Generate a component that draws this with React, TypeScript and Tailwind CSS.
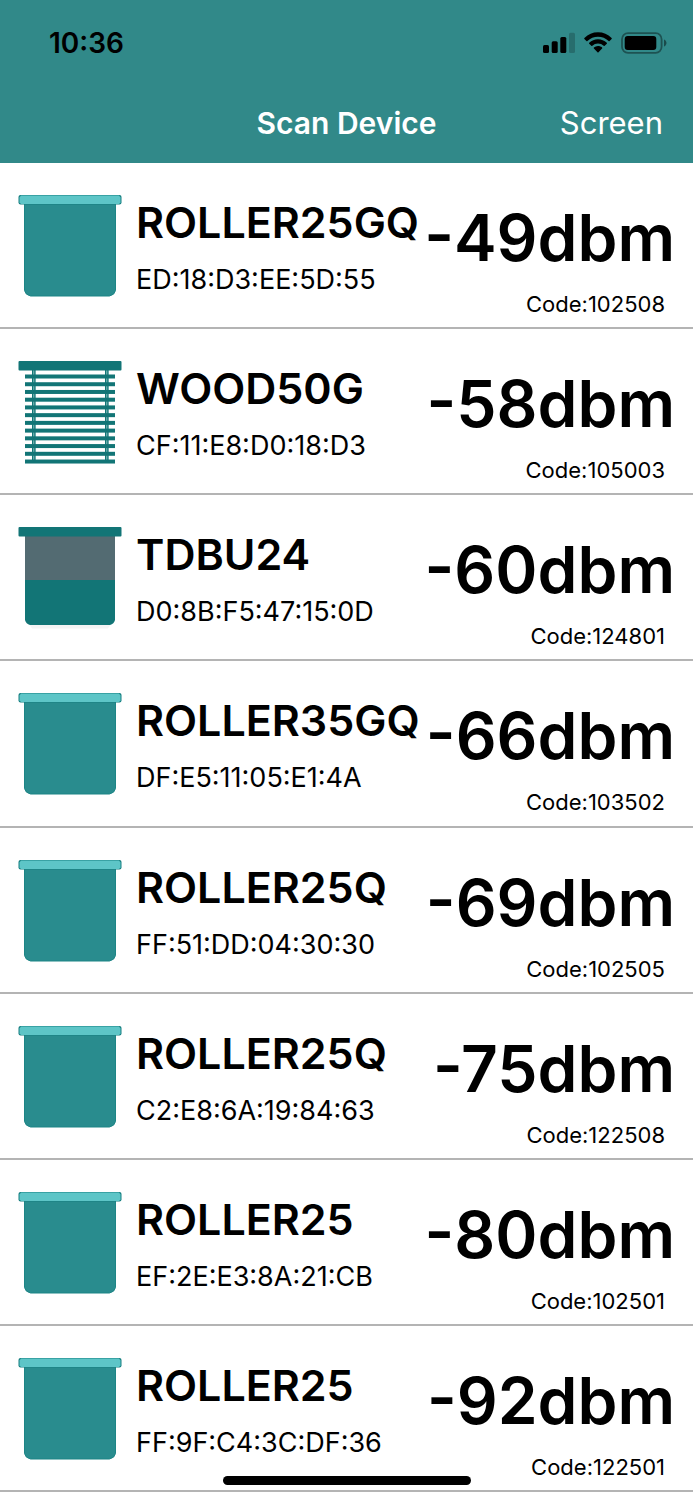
type Kind = "roller" | "blind" | "tdbu";

interface Device {
  name: string;
  mac: string;
  rssi: number;
  code: string;
  kind: Kind;
}

const devices: Device[] = [
  { name: "ROLLER25GQ", mac: "ED:18:D3:EE:5D:55", rssi: -49, code: "102508", kind: "roller" },
  { name: "WOOD50G", mac: "CF:11:E8:D0:18:D3", rssi: -58, code: "105003", kind: "blind" },
  { name: "TDBU24", mac: "D0:8B:F5:47:15:0D", rssi: -60, code: "124801", kind: "tdbu" },
  { name: "ROLLER35GQ", mac: "DF:E5:11:05:E1:4A", rssi: -66, code: "103502", kind: "roller" },
  { name: "ROLLER25Q", mac: "FF:51:DD:04:30:30", rssi: -69, code: "102505", kind: "roller" },
  { name: "ROLLER25Q", mac: "C2:E8:6A:19:84:63", rssi: -75, code: "122508", kind: "roller" },
  { name: "ROLLER25", mac: "EF:2E:E3:8A:21:CB", rssi: -80, code: "102501", kind: "roller" },
  { name: "ROLLER25", mac: "FF:9F:C4:3C:DF:36", rssi: -92, code: "122501", kind: "roller" },
];

function RollerIcon() {
  return (
    <svg viewBox="0 0 104 104" className="size-[104px] shrink-0" aria-hidden="true">
      <path d="M6.500 9h91v87.500q-1 4.500-6 5.500h-79q-5-1-6-5.500z" fill="#298c8e" stroke="#1d8586" strokeWidth="1" />
      <rect x="0.500" y="1" width="103" height="9.500" rx="2" fill="#167f80" />
      <path d="M3 1.500h98l1.500 2v5l-1.500 1.500h-98l-1.500-1.500v-5z" fill="#5dc5c7" />
    </svg>
  );
}

function BlindIcon() {
  const slats = Array.from({ length: 12 }, (_, i) => 14.500 + i * 7.73);
  return (
    <svg viewBox="0 0 104 104" className="size-[104px] shrink-0" aria-hidden="true">
      <g fill="#7db9b9">
        <rect x="14" y="10" width="3.500" height="92" />
        <rect x="87" y="10" width="3.500" height="92" />
      </g>
      <g fill="#127576">
        <rect x="0.500" y="1" width="103" height="9.500" rx="1" />
        {slats.map((y) => (
          <rect key={y} x="7" y={y} width="90" height="4" />
        ))}
        <rect x="14" y="10" width="1.200" height="92" />
        <rect x="16.300" y="10" width="1.200" height="92" />
        <rect x="87" y="10" width="1.200" height="92" />
        <rect x="89.300" y="10" width="1.200" height="92" />
      </g>
    </svg>
  );
}

function TopDownIcon() {
  return (
    <svg viewBox="0 0 104 104" className="size-[104px] shrink-0" aria-hidden="true">
      <path d="M11 98h82l-3 4.500h-76z" fill="#f4f4f4" />
      <path d="M7 9h90v85q-1 4-5 5h-80q-4-1-5-5z" fill="#127576" />
      <rect x="7" y="9" width="90" height="45" fill="#536b72" />
      <rect x="0.500" y="1" width="103" height="9.500" rx="1" fill="#127576" />
    </svg>
  );
}

const icons: Record<Kind, () => React.JSX.Element> = {
  roller: RollerIcon,
  blind: BlindIcon,
  tdbu: TopDownIcon,
};

function StatusBar() {
  return (
    <div className="flex h-[86px] items-center justify-between pr-[26px] pl-[49px] text-black">
      <span className="text-[28px] leading-8 font-semibold">10:36</span>
      <div className="flex items-center gap-[9px]">
        <svg viewBox="0 0 32 22" className="h-[22px] w-8" role="img" aria-label="Signal strength">
          <rect x="0" y="13" width="6" height="8" rx="1.500" />
          <rect x="8.700" y="9.300" width="6" height="11.700" rx="1.500" />
          <rect x="17.300" y="5" width="6" height="16" rx="1.500" />
          <rect x="26" y="0.800" width="6" height="20.200" rx="1.500" opacity="0.200" />
        </svg>
        <svg viewBox="0 0 28 22" className="h-[22px] w-7" role="img" aria-label="Wi-Fi">
          <path d="M14 0.300c5.200 0 10 2 13.600 5.600.3.300.3.700 0 1l-2 2c-.3.300-.7.300-1 0a15.400 15.400 0 0 0-21.200 0c-.3.300-.7.300-1 0l-2-2c-.3-.3-.3-.7 0-1A19.400 19.400 0 0 1 14 .3z" />
          <path d="M14 7.200c3.300 0 6.400 1.200 8.800 3.500.3.300.3.700 0 1l-2.100 2c-.3.300-.7.300-1 0a8.400 8.400 0 0 0-11.400 0c-.3.300-.7.300-1 0l-2.100-2c-.3-.3-.3-.7 0-1A12.700 12.700 0 0 1 14 7.200z" />
          <path d="M14 14c1.500 0 3 .5 4.100 1.500.3.300.3.700 0 1l-3.600 3.700c-.3.300-.7.300-1 0l-3.600-3.700c-.3-.3-.3-.7 0-1A6.200 6.200 0 0 1 14 14z" />
        </svg>
        <svg viewBox="0 0 46 22" className="h-[22px] w-[46px]" role="img" aria-label="Battery">
          <rect x="1" y="1.200" width="39.600" height="19.600" rx="6" fill="none" stroke="#000" strokeWidth="1.800" opacity="0.400" />
          <rect x="3.700" y="4" width="31.600" height="14" rx="3" />
          <path d="M43 7.500c1.600.6 2.500 2 2.500 3.500s-.9 2.900-2.500 3.500z" opacity="0.450" />
        </svg>
      </div>
    </div>
  );
}

function DeviceRow({ device }: { device: Device }) {
  const Icon = icons[device.kind];
  return (
    <li className="flex items-start justify-between border-b-2 border-[#b4b4b4] pr-[18px] pl-[18px] whitespace-nowrap">
      <div className="flex min-w-0 gap-[14px] pt-[31px]">
        <Icon />
        <div className="min-w-0 pt-1">
          <h2 className="text-[43px] leading-[48px] font-semibold">{device.name}</h2>
          <p className="mt-[18px] text-[27px] leading-8">{device.mac}</p>
        </div>
      </div>
      <div className="pt-10 text-right">
        <p className="text-[64px] leading-[70px] font-semibold">{device.rssi}dbm</p>
        <p className="mt-[17px] pr-[10px] text-[22px] leading-7">Code:{device.code}</p>
      </div>
    </li>
  );
}

export default function App() {
  return (
    <div className="flex min-h-screen flex-col bg-white pb-2 font-['Inter',sans-serif] text-black">
      <header className="bg-[#318989]">
        <StatusBar />
        <div className="grid h-[77px] grid-cols-[1fr_auto_1fr] items-center px-[30px] pb-[3px] text-white">
          <h1 className="col-start-2 text-[30px] leading-10 font-semibold">Scan Device</h1>
          <button type="button" className="justify-self-end text-[31px] leading-10">
            Screen
          </button>
        </div>
      </header>
      <main className="flex grow flex-col">
        <ul className="grid grow auto-rows-fr grid-cols-[minmax(0,1fr)]">
          {devices.map((device) => (
            <DeviceRow key={device.mac} device={device} />
          ))}
        </ul>
      </main>
      <div className="fixed bottom-[15px] left-1/2 h-[9px] w-[248px] -translate-x-1/2 rounded-full bg-black" />
    </div>
  );
}
